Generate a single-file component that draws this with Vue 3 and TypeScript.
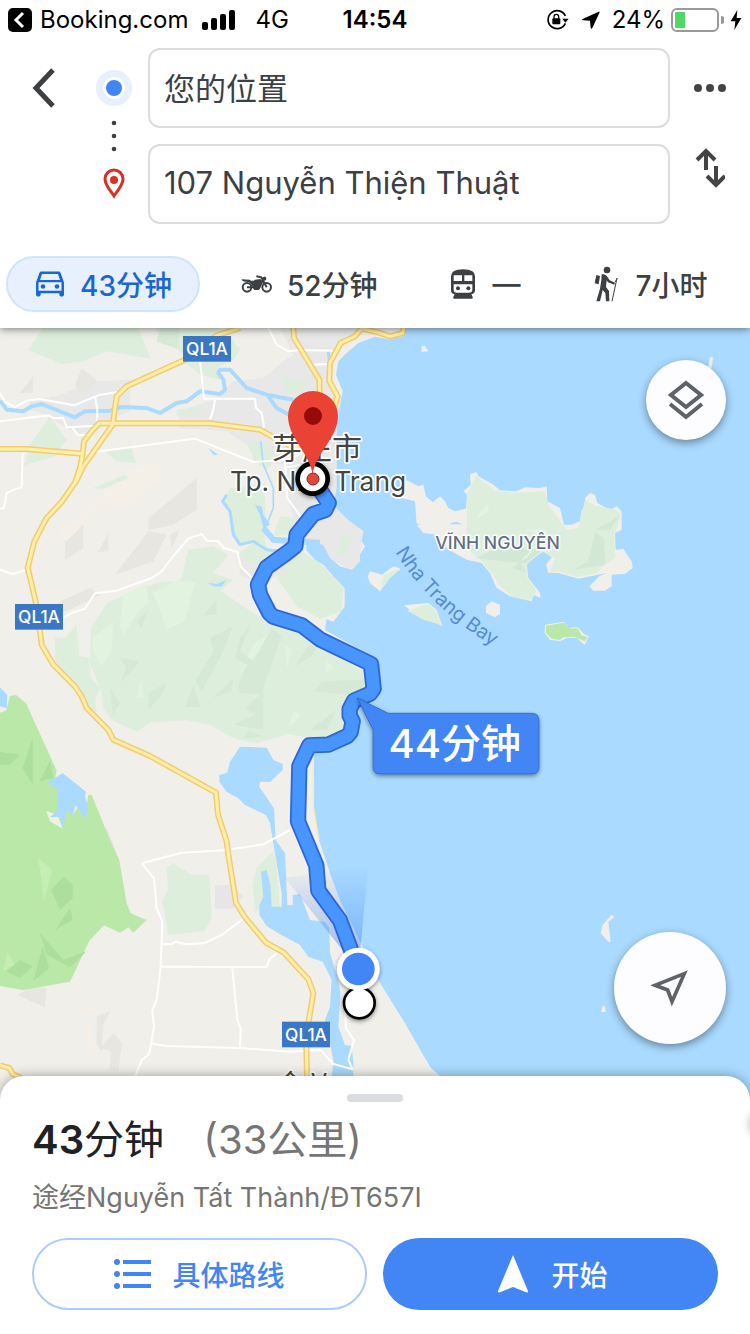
<script setup lang="ts">
import { ref } from 'vue'

type Mode = 'car' | 'moto' | 'train' | 'walk'

const modes: { id: Mode; name: string; time: string }[] = [
  { id: 'car', name: '驾车', time: '43分钟' },
  { id: 'moto', name: '摩托车', time: '52分钟' },
  { id: 'train', name: '公共交通', time: '—' },
  { id: 'walk', name: '步行', time: '7小时' },
]

const active = ref<Mode>('car')
const origin = ref('您的位置')
const destination = ref('107 Nguyễn Thiện Thuật')

const majorRoads = [
  'M720 0L650 22L555 95L380 175L350 205L338 290L250 415L228 460L185 522L140 570L103 640L83 720L92 756L108 826L120 910L125 950L160 1010L225 1075L245 1105L260 1140L325 1206L340 1235L450 1284L648 1394L654 1460L680 1540L685 1580L708 1725L735 1768L798 1844L852 1874L925 1954L940 1996L925 2085L919 2160L923 2316',
  'M0 363H80L248 377L252 340L275 310L297 286H630L780 305L850 345L910 365',
  'M248 377L240 420L226 462',
  'M880 0L882 30L958 155L960 250L930 360',
  'M1212 -5L1208 15L1170 25L1130 12L1085 2L1065 25L1022 45L990 105L988 160L1013 205L1000 250L940 400',
  'M0 2212L28 2220L38 2238L64 2250',
]

const minorRoads = [
  'M0 280L148 262L160 270H190L200 298L290 293',
  'M200 298H215L235 322L258 320',
  'M285 205L292 245L290 293',
  'M0 195L15 222L45 238L80 218L120 213L222 232L300 200L350 193',
  'M805 0L830 50L865 70L900 66L1000 68',
  'M600 95L612 212H765L768 240L785 255L792 295L785 305',
  'M645 215L640 245L630 275',
  'M940 110L985 108',
  'M258 375L585 332L760 402L860 395L910 375',
  'M68 375L65 478L42 485L20 495L12 540L0 542',
  'M855 400L862 510L905 570',
  'M850 420L900 410',
  'M0 725L38 738L80 725',
  'M190 870L215 855L255 842L285 796L350 788L455 750L485 730L515 690L565 632L605 618L620 638L655 640L672 660L712 672L722 715L755 748',
  'M425 1606L545 1574L680 1566L790 1549L870 1506',
  'M425 1606L462 1651L470 1741L487 1781L482 1916L470 2016L457 2046L462 2096L450 2166L445 2181L425 2196L400 2260',
  'M487 1849H515L525 1841L560 1849L612 1846L665 1821L730 1773',
  'M482 1916L800 1917L808 1894L830 1876',
  'M697 1921L712 2076L722 2101L720 2159',
  'M450 2146L500 2154L720 2160L870 2171L962 2166L1000 2208L1058 2224L1045 2196L1062 2136L1038 2101L1035 2036',
]

const routeLine =
  'M938 452L986 525L976 546L940 558L890 620L886 655L860 675L800 718L774 770L780 800L808 855L820 866L905 892L960 934L1113 1008L1121 1082L1110 1097L1062 1118L1049 1143L1049 1163L1058 1180L1052 1212L1042 1224L985 1250L928 1252L898 1315L894 1480L949 1612L955 1688L1020 1777L1075 1925'

const shields = [
  { x: 549, y: 24 },
  { x: 45, y: 828 },
  { x: 846, y: 2081 },
]
</script>

<template>
  <div class="app">
    <header class="top">
      <div class="status">
        <div class="status-side">
          <svg width="24" height="24" viewBox="0 0 24 24" aria-hidden="true">
            <rect width="24" height="24" rx="5" />
            <path d="M15 5L8 12L15 19" fill="none" stroke="#fff" stroke-width="3" />
          </svg>
          <a href="#" class="return-link">Booking.com</a>
          <svg class="signal" width="34" height="20" viewBox="0 0 34 20" aria-hidden="true">
            <rect x="0" y="12" width="6" height="8" rx="2" />
            <rect x="9" y="8" width="6" height="12" rx="2" />
            <rect x="18" y="4" width="6" height="16" rx="2" />
            <rect x="27" y="0" width="6" height="20" rx="2" />
          </svg>
          <span class="network">4G</span>
        </div>
        <time class="clock">14:54</time>
        <div class="status-side end">
          <svg width="23" height="22" viewBox="0 0 69 66" aria-hidden="true">
            <path d="M58 43A27 27 0 1 1 58 21" fill="none" stroke="#000" stroke-width="5" />
            <path d="M49 29H68L58 41Z" />
            <rect x="19" y="28" width="24" height="18" rx="3" />
            <path d="M24 29V23a7 7 0 0 1 14 0v6" fill="none" stroke="#000" stroke-width="4" />
          </svg>
          <svg class="gps" width="19" height="19" viewBox="0 0 57 57" aria-hidden="true">
            <path d="M53 2Q57 1 55 6L34 51Q31 56 29 50L27 29L6 28Q-1 27 5 24Z" />
          </svg>
          <span class="percent">24%</span>
          <svg width="53" height="24" viewBox="0 0 53 24" aria-hidden="true">
            <rect x="1" y="1" width="46" height="22" rx="5" fill="none" stroke="#999" stroke-width="2" />
            <rect x="4" y="4" width="10" height="16" rx="1" fill="#4cd964" />
            <path d="M50 8a4 4 0 0 1 0 8z" fill="#999" />
          </svg>
          <svg width="12" height="20" viewBox="0 0 36 60" aria-hidden="true">
            <path d="M22 0L2 34H16L13 60L34 24H20Z" />
          </svg>
        </div>
      </div>

      <form class="search" @submit.prevent>
        <button type="button" class="icon-button back" aria-label="返回">
          <svg width="24" height="40" viewBox="0 0 24 40">
            <path d="M21 2L4 20L21 38" fill="none" stroke="#3c4043" stroke-width="5" />
          </svg>
        </button>
        <svg class="stops" width="36" height="176" viewBox="0 0 36 176" aria-hidden="true">
          <circle cx="18" cy="40" r="18" fill="#e8f0fe" />
          <circle cx="18" cy="40" r="11" fill="#fff" />
          <circle cx="18" cy="40" r="8" fill="#4285f4" />
          <g fill="#3c4043">
            <circle cx="18" cy="75" r="2.3" />
            <circle cx="18" cy="88" r="2.3" />
            <circle cx="18" cy="101" r="2.3" />
          </g>
          <path d="M18 148C14 142 9 137 9 131a9 9 0 0 1 18 0C27 137 22 142 18 148Z" fill="none" stroke="#d93025" stroke-width="3" />
          <circle cx="18" cy="132" r="4" fill="#d93025" />
        </svg>
        <div class="fields">
          <input v-model="origin" type="text" aria-label="起点" />
          <input v-model="destination" type="text" aria-label="目的地" />
        </div>
        <div class="side-actions">
          <button type="button" class="icon-button" aria-label="更多">
            <svg width="32" height="8" viewBox="0 0 32 8" fill="#444">
              <circle cx="4" cy="4" r="4" />
              <circle cx="16" cy="4" r="4" />
              <circle cx="28" cy="4" r="4" />
            </svg>
          </button>
          <button type="button" class="icon-button" aria-label="交换起点和目的地">
            <svg width="30" height="40" viewBox="0 0 30 40" fill="none" stroke="#444" stroke-width="4">
              <path d="M11 22V3M2 12L11 3L20 12" />
              <path d="M21 18V37M12 28L21 37L30 28" />
            </svg>
          </button>
        </div>
      </form>

      <nav class="modes" aria-label="出行方式">
        <button
          v-for="mode in modes"
          :key="mode.id"
          type="button"
          class="mode"
          :class="{ active: active === mode.id }"
          :aria-pressed="active === mode.id"
          :aria-label="mode.name + ' ' + mode.time"
          @click="active = mode.id"
        >
          <svg v-if="mode.id === 'car'" width="32" height="32" viewBox="1.7 2.7 20.6 20.6" fill="currentColor">
            <path d="M18.92 6.01C18.72 5.42 18.16 5 17.5 5h-11c-.66 0-1.21.42-1.42 1.01L3 12v8c0 .55.45 1 1 1h1c.55 0 1-.45 1-1v-1h12v1c0 .55.45 1 1 1h1c.55 0 1-.45 1-1v-8l-2.08-5.99zM6.85 6.5h10.29l1.28 3.91H5.57L6.85 6.5zM19.4 17.4H4.6v-5.5h14.8v5.5z" />
            <circle cx="7.5" cy="14.6" r="1.5" />
            <circle cx="16.5" cy="14.6" r="1.5" />
          </svg>
          <svg v-else-if="mode.id === 'moto'" width="32" height="32" viewBox="0 0 96 96" fill="currentColor">
            <g fill="none" stroke="currentColor" stroke-width="6">
              <circle cx="18" cy="58" r="13" />
              <circle cx="77" cy="58" r="13" />
              <path d="M77 58L61 28L46 25M18 58H42M62 35L74 28" />
            </g>
            <path d="M2 34L26 35Q34 42 42 35L58 33L70 42Q62 46 60 56L54 66H40Q35 62 34 54Q28 40 13 41Q3 41 2 34Z" />
            <circle cx="70" cy="32" r="6" />
          </svg>
          <svg v-else-if="mode.id === 'train'" width="32" height="32" viewBox="0 0 96 96">
            <path d="M12 25Q12 4 48 4T84 25V66Q84 77 73 79L77 87Q79 91 75 92H21Q17 91 19 87L23 79Q12 77 12 66Z" fill="currentColor" />
            <path d="M20 22H45V39H20ZM52 22H76V39H52ZM20 49H76V65Q76 74 66 74H30Q20 74 20 65Z" fill="#fff" />
            <circle cx="33" cy="61" r="6" fill="currentColor" />
            <circle cx="64" cy="61" r="6" fill="currentColor" />
          </svg>
          <svg v-else class="walker" width="32" height="32" viewBox="0 0 96 96" fill="currentColor">
            <circle cx="51" cy="6" r="10" />
            <path d="M19 21L30 24L26 49L14 46Z" />
            <path d="M35 19Q47 16 54 29L59 37L75 44L73 50L54 43L50 37L48 57L57 69L58 100H48L46 75L38 66L30 100H19L30 62L34 37Z" />
            <path d="M81 30L66 100M75 42L82 31" fill="none" stroke="currentColor" stroke-width="3" />
          </svg>
          <span>{{ mode.time }}</span>
        </button>
      </nav>
    </header>

    <main class="map">
      <svg class="canvas" viewBox="0 0 2250 2316" preserveAspectRatio="xMidYMin slice" role="img" aria-label="芽庄路线地图">
        <defs>
          <linearGradient id="beam" x1="0" y1="0" x2="0" y2="1">
            <stop offset="0" stop-color="#4285f4" stop-opacity="0" />
            <stop offset="1" stop-color="#4285f4" stop-opacity=".55" />
          </linearGradient>
          <filter id="shade" x="-20%" y="-20%" width="140%" height="150%">
            <feDropShadow dx="0" dy="5" stdDeviation="6" flood-color="#000" flood-opacity=".45" />
          </filter>
          <path id="bay" d="M1186 672Q1300 860 1540 990" />
        </defs>

        <rect width="2250" height="2316" fill="#f0efea" />

        <!-- built-up areas -->
        <g fill="#e8e8e8">
          <path d="M840 0H1080L1010 60L985 150L1010 220V460L1000 530L1090 615L1080 700L1050 725L900 640L860 500L850 410L770 400L740 350L680 310L540 300L535 250L640 215L700 160L790 150L850 100L880 80Z" />
          <path d="M170 205L285 160L390 155V250L340 270L300 300L260 330L200 300L140 260L90 245V215Z" />
          <path d="M715 680L760 660L850 665L790 720L760 756L720 740Z" />
          <path d="M645 1674L700 1668L728 1706L700 1742H645Z" fill="#e6e5e8" />
        </g>

        <!-- terrain relief -->
        <g fill="#e8e6e1">
          <path d="M245 120L292 160L240 200L225 170ZM100 145L98 195L58 195ZM590 450V545L520 590L445 605V570L520 510ZM195 610L250 575V660L195 695ZM325 615V670L295 672ZM445 610L500 620L460 700L345 740ZM540 605L515 660L510 620ZM180 820L270 780L300 800L200 850L170 850ZM880 670L912 670L880 725L800 756Z" />
          <path d="M50 2000L100 1975L140 1980L135 2038ZM290 2065L330 2050L310 2090L305 2170L290 2150ZM340 2116L366 2145L355 2228H330L332 2170L300 2160ZM320 1500L345 1560L360 1660L300 1520Z" />
        </g>
        <g fill="#f4efe7">
          <path d="M400 415L490 405L480 460L370 545L310 530L200 640L170 610L260 545L330 480ZM245 2055L262 2030L328 2050ZM250 2098L272 2090L290 2160L268 2170Z" />
        </g>

        <!-- woodland -->
        <g fill="#ddefdc">
          <path d="M130 0H415L452 92L320 70L250 100L185 108L85 66ZM465 0H660L620 30L550 80L500 40Z" />
          <path d="M545 95L590 100L640 60L690 25L720 65L700 95L650 120L660 155L600 140Z" />
          <path d="M850 150L935 155L900 190L860 200ZM530 245L605 240L570 265L530 262Z" />
          <path d="M150 265L200 335L165 385L72 412L90 350ZM310 365L395 360L408 405L350 400ZM375 440L385 450L310 482L280 480Z" />
          <path d="M665 520L690 480L790 470L800 580L790 600L800 665L760 640L715 645L695 600L690 550Z" />
          <path d="M750 340L790 345L830 390L800 425L760 400ZM840 565L885 570L870 620L820 625ZM1030 615L1058 625L1035 685L1005 680Z" />
          <path d="M565 665L640 655L685 680L640 735L700 756L660 790L480 790L545 750ZM720 672L760 645L830 670L780 705L740 702Z" />
          <path d="M830 750L905 672L960 705L1030 780L1025 850L960 872L890 835Z" />
          <path d="M480 762L630 755L665 790L760 856L905 918L1095 1035L1100 1080L1040 1136L1035 1206L1000 1226L930 1231L865 1218L770 1246L700 1231L630 1191L560 1176L450 1184L410 1211L335 1176L310 1141L305 1090L270 1006L273 900L320 826L400 790Z" />
          <path d="M165 928L195 930L230 890L238 985L268 988L272 1050L302 1080L285 1115L290 1160L258 1130L230 1075L165 1005Z" />
          <path d="M498 1620L518 1606L575 1640H628L635 1770L615 1808L505 1821L487 1721L505 1680Z" />
          <path d="M820 1570L830 1620L840 1740H780L765 1755L757 1670L770 1620Z" />
        </g>
        <g fill="#e2f4df">
          <path d="M370 800L440 770L445 825L415 850L370 920L360 890ZM460 795L525 760L585 762L555 880L500 905ZM280 930L340 880L335 970L305 1015L275 960ZM815 910L770 980L720 1035L760 950ZM855 955L875 960L862 1020ZM425 1045L430 1110L410 1108ZM980 1000L1005 1020L975 1035ZM880 1150L905 1158L865 1200Z" />
        </g>
        <g fill="#d6e9d6">
          <path d="M480 0H540L530 60L470 42ZM360 990L420 1000L362 1065L378 1020ZM330 1080L360 1125L338 1160ZM445 1095L497 1065L490 1095L445 1145ZM580 1070L602 1138H555ZM650 815V860L610 862ZM445 845L425 900L408 880ZM630 930L698 895L665 980L605 1090L585 1060L640 970ZM750 890L720 970L760 1000L815 900L845 925L790 1080V1205L702 1190L765 1160L735 1140L780 1100L720 1095L715 1070L740 1010L705 990L720 930ZM700 1050L695 1090L640 1110ZM885 925L850 1010L870 960ZM965 925L940 980L885 1015L920 960ZM965 1060L1095 1055L1090 1085L1040 1100L945 1090ZM1010 1145L980 1205L930 1205ZM745 1208L790 1225L730 1232Z" />
        </g>

        <!-- nature reserve -->
        <path fill="#bae8a8" d="M0 1154L18 1148L30 1104L48 1101L78 1126L170 1328L165 1350L258 1440L265 1401H275L330 1536L358 1596L380 1726L392 1756L440 1776L400 1814L385 1798L360 1814L312 1792L268 1838L210 1961L68 1986L0 1974Z" />
        <path fill="#acdf9b" d="M0 1272L60 1280L30 1310L0 1312ZM98 1230V1370L68 1320ZM150 1300L160 1350L118 1360ZM153 1686L192 1646L218 1670V1710L180 1745ZM210 1740L218 1775L165 1806ZM128 1855L147 1920L100 1960ZM120 1815L190 1895L260 1870L210 1918L140 1880ZM20 1930L60 1895L98 1915L60 1950Z" />
        <path fill="#c5eeb5" d="M115 1590L158 1625L132 1720ZM22 1870L42 1910L10 1930Z" />
        <path fill="#f0efea" d="M138 1448L172 1460L188 1502L150 1480ZM215 1420L238 1430L218 1462Z" />

        <!-- water -->
        <g fill="#aadaff">
          <path d="M1216 0L1212 24L1165 34L1125 26L1075 45L1040 75L1015 100L1008 140L1028 190L1020 230L1010 300V480L1000 530L1040 572L1090 610L1085 640L1095 655L1080 680V700L1055 725L1020 715L990 690L970 652L920 632L918 665L945 695L970 710L1000 745L1034 781V836L1000 881L980 874L975 906L1125 990L1130 1080L1060 1110L1050 1170L1070 1210L1050 1225L940 1270V1436L957 1536L990 1636L1020 1716L1085 1851L1135 1956L1215 2086L1290 2216L1320 2244L1400 2316H2250V0Z" />
          <path d="M720 1256L800 1259L820 1296L848 1308V1326L810 1362L780 1361L778 1376L822 1441L827 1536L855 1576L862 1731H878V1701L900 1698L930 1776L975 1781L988 1801L990 1876L1012 1946L1022 1996L1015 2096L1035 2151L1055 2154L1060 2206V2316H990L1000 2196L975 2076L990 2036L995 1956L968 1901L925 1886L900 1851L835 1816L800 1794L778 1761V1731L790 1706L783 1631L800 1626L812 1676L815 1736H845V1696L825 1576L810 1486L798 1461L735 1431L715 1411L680 1391L658 1361V1341L682 1334L690 1301Z" />
          <path d="M140 1364L188 1336L258 1391L255 1406L264 1436L258 1471L245 1461L228 1431L218 1461L200 1446L188 1501L180 1466L150 1468L172 1448V1384L155 1371ZM0 1078L22 1101L20 1141L0 1135Z" />
          <path d="M625 360L655 380L640 380ZM625 765L650 768L680 755L665 776L640 775ZM765 532L785 535L790 560L810 590L790 600L780 560Z" />
        </g>
        <g fill="none" stroke="#aadaff" stroke-width="9" stroke-linejoin="round">
          <path stroke-width="12" d="M0 218L20 245L70 250L95 235L125 228L225 268L255 250L330 248L365 237L440 240L480 255L530 225L560 220L600 190L660 198L675 185L670 155L655 135L660 125L690 125L740 180L800 200L880 215M805 205L830 240L885 270" />
          <path d="M782 340L790 410L820 480V540L800 590L790 610" stroke-width="5" />
          <path d="M790 600L820 635L880 640L960 644" stroke-width="18" />
          <path d="M680 500L668 520L690 550L700 620L720 650L760 640L800 665L860 672" />
          <path d="M985 70L988 100" />
        </g>
        <path d="M940 1280V1436L957 1536" fill="none" stroke="#fbe9b7" stroke-width="4" />

        <!-- islands -->
        <g fill="#f0efea">
          <path d="M1205 460L1222 457L1255 475L1270 470L1278 505L1298 523L1320 505L1335 520L1345 540L1365 550L1398 542L1402 500L1390 490L1412 470L1410 438L1430 432L1435 445L1480 470L1500 487L1550 490L1575 478L1620 480L1640 475L1642 520L1680 540L1692 590H1715L1740 580L1745 545L1758 540L1755 510L1770 495L1785 500L1792 525L1830 545L1850 535L1865 550V605L1845 615L1847 665L1870 663L1895 700L1898 720L1875 738L1835 740L1835 775L1815 788H1780L1768 775L1798 745L1820 735L1735 752L1675 735H1645L1638 710L1655 688L1630 670L1580 705L1585 750L1620 795L1622 810L1600 800L1595 820L1530 805L1490 780L1470 735L1445 705L1400 695L1345 665L1310 620L1270 615L1250 590L1245 520L1205 510Z" />
          <path d="M1103 745L1110 730L1145 740L1180 715L1202 722L1170 750L1140 790L1110 765ZM1212 832L1285 825L1310 845L1327 895L1290 875L1240 855ZM1458 834L1475 820L1500 830V858L1485 868L1458 855ZM1635 890L1690 881L1708 900L1732 897L1752 918L1767 925L1754 950L1730 930L1700 930L1680 940L1650 935L1634 915Z" />
          <path d="M1265 55L1275 53L1285 70L1265 72ZM2130 88H2139L2135 120L2123 125ZM1835 1760L1843 1767L1825 1782L1832 1840L1825 1842L1802 1815L1808 1790ZM1808 2034H1814L1818 2052H1803Z" />
        </g>
        <g fill="#ddefdc">
          <path d="M1428 444L1485 488L1540 494L1635 490L1645 530L1700 605L1735 600L1755 515L1788 533L1850 545L1862 555L1850 605L1843 615L1845 690L1815 710L1790 735L1730 748L1680 730L1648 735L1665 690L1625 670L1580 710L1582 750L1610 790L1595 815L1540 808L1500 775L1475 735L1445 700L1400 660V500Z" />
          <path d="M1150 740L1198 722L1170 750L1143 780ZM1222 848L1285 828L1308 848L1322 890L1270 875Z" />
        </g>
        <path fill="#bae8a8" d="M1638 893L1690 884L1712 902L1732 900L1745 922L1764 928L1754 940L1722 926L1690 928L1680 936L1655 932L1638 915Z" />
        <path fill="#d3e7d5" d="M1785 612L1812 630L1815 710L1720 725L1765 700ZM1862 560L1830 605H1785L1840 575ZM1500 655L1630 665L1575 705L1510 700L1430 690ZM1560 700L1580 735L1538 720Z" />
        <path fill="#e4f4e3" d="M1465 523V550L1425 575ZM1570 605H1640V625ZM1620 640L1580 690L1560 700Z" />
        <path fill="#aadaff" d="M1228 585L1240 582L1262 590H1228ZM1352 585L1370 582L1388 589H1352Z" />

        <!-- roads -->
        <g fill="none" stroke-linejoin="round">
          <path v-for="road in minorRoads" :key="road" :d="road" stroke="#fff" stroke-width="6" />
          <path v-for="road in majorRoads" :key="road" :d="road" stroke="#f3cc6c" stroke-width="18" />
          <path v-for="road in majorRoads" :key="road + 'fill'" :d="road" stroke="#ffefab" stroke-width="9" />
        </g>

        <g v-for="shield in shields" :key="shield.y">
          <rect :x="shield.x" :y="shield.y" width="144" height="77" fill="#3a78c6" />
          <text class="shield" :x="shield.x + 72" :y="shield.y + 58">QL1A</text>
        </g>

        <text class="city" x="816" y="394" font-size="90">芽庄市</text>
        <text class="city" x="690" y="490" font-size="79">Tp. Nha Trang</text>
        <text class="island" x="1306" y="663">VĨNH NGUYÊN</text>
        <text class="bay"><textPath href="#bay">Nha Trang Bay</textPath></text>
        <text class="city" x="832" y="2296" font-size="78">会</text>
        <text class="city" x="932" y="2288" font-size="72">V</text>

        <path d="M1075 1925L855 1650L1105 1610Z" fill="url(#beam)" />

        <!-- route -->
        <g fill="none" stroke-linejoin="round">
          <path :d="routeLine" stroke="#2f66d8" stroke-width="49" />
          <path :d="routeLine" stroke="#4795ff" stroke-width="38" />
        </g>

        <g filter="url(#shade)">
          <circle cx="1078" cy="2025" r="46" fill="#fff" stroke="#000" stroke-width="8" />
          <circle cx="1075" cy="1923" r="64" fill="#fff" />
        </g>
        <circle cx="1075" cy="1923" r="49" fill="#4285f4" />

        <circle cx="938" cy="452" r="45" fill="#fff" stroke="#000" stroke-width="14" filter="url(#shade)" />
        <path d="M938 440C930 375 864 330 864 264a75 75 0 0 1 150 0C1014 330 946 375 938 440Z" fill="#ea4335" />
        <circle cx="939" cy="264" r="27" fill="#960a0a" />
        <circle cx="939" cy="453" r="18" fill="#e2463d" stroke="#7d2724" stroke-width="3" />

        <g filter="url(#shade)">
          <path d="M1072 1110L1165 1156H1595Q1617 1156 1617 1178V1316Q1617 1338 1595 1338H1141Q1119 1338 1119 1316V1205Z" fill="#4285f4" stroke="#2a5db0" stroke-width="2" />
        </g>
        <text class="callout" x="1364" y="1290">44分钟</text>
      </svg>

      <button type="button" class="fab layers" aria-label="图层">
        <svg width="36" height="40" viewBox="0 0 36 40" fill="none" stroke="#5f6368" stroke-width="4">
          <path d="M18 3L33 15L18 27L3 15Z" />
          <path d="M2 24L18 37L34 24" />
        </svg>
      </button>
      <button type="button" class="fab locate" aria-label="定位">
        <svg width="38" height="38" viewBox="0 0 114 114" fill="none" stroke="#5f6368" stroke-width="11">
          <path d="M100 14L12 49L50 63L63 98Z" />
        </svg>
      </button>
    </main>

    <section class="sheet">
      <div class="handle"></div>
      <h1 class="summary"><strong>43</strong>分钟 <span class="distance">(33公里)</span></h1>
      <p class="via">途经Nguyễn Tất Thành/ĐT657I</p>
      <div class="actions">
        <button type="button" class="action outline">
          <svg width="38" height="32" viewBox="0 0 38 32" fill="currentColor" aria-hidden="true">
            <circle cx="3" cy="4" r="3" />
            <circle cx="3" cy="16" r="3" />
            <circle cx="3" cy="28" r="3" />
            <path d="M9 2H37V6H9ZM9 14H37V18H9ZM9 26H37V30H9Z" />
          </svg>
          具体路线
        </button>
        <button type="button" class="action solid">
          <svg width="38" height="38" viewBox="-12 0 114 114" fill="currentColor" aria-hidden="true">
            <path d="M48 0L93 108Q94 114 87 112L48 96L9 112Q2 114 3 108Z" />
          </svg>
          开始
        </button>
      </div>
    </section>
  </div>
</template>

<style>
body {
  margin: 0;
}
</style>

<style scoped>
* {
  box-sizing: border-box;
}

.app {
  display: flex;
  flex-direction: column;
  min-height: 100vh;
  overflow: hidden;
  background: #fff;
  color: #3c4043;
  font-family: Inter, "Noto Sans CJK SC", sans-serif;
}

button,
input {
  font: inherit;
  color: inherit;
}

button {
  padding: 0;
  border: 0;
  background: none;
  cursor: pointer;
}

svg {
  display: block;
  flex: none;
}

.top {
  position: relative;
  z-index: 1;
  background: #fff;
  box-shadow: 0 1px 8px rgba(0, 0, 0, 0.5);
}

.status {
  display: grid;
  grid-template-columns: 1fr auto 1fr;
  align-items: center;
  height: 40px;
  padding: 0 8px;
  color: #000;
  font-size: 24px;
  line-height: 40px;
}

.status-side {
  display: flex;
  align-items: center;
  gap: 8px;
}

.end {
  justify-content: flex-end;
  gap: 6px;
}

.return-link {
  color: inherit;
  text-decoration: none;
}

.signal {
  margin-left: 6px;
}

.network {
  margin-left: 11px;
}

.clock {
  font-weight: 600;
}

.gps {
  margin: 0 6px;
}

.search {
  display: flex;
  padding-top: 8px;
}

.icon-button {
  display: flex;
  align-items: center;
  justify-content: center;
  width: 80px;
  height: 80px;
}

.back {
  width: 88px;
}

.stops {
  margin: 0 16px 0 8px;
}

.fields {
  display: flex;
  flex: 1;
  flex-direction: column;
  gap: 16px;
  min-width: 0;
}

.fields input {
  width: 100%;
  height: 80px;
  padding: 0 14px 4px;
  border: 2px solid #dadce0;
  border-radius: 12px;
  background: #fff;
  font-size: 31px;
}

.modes {
  display: flex;
  gap: 13px;
  padding: 32px 6px 16px;
}

.mode {
  display: flex;
  align-items: center;
  gap: 14px;
  height: 56px;
  padding: 0 26px;
  border: 2px solid transparent;
  border-radius: 28px;
  font-size: 28px;
  font-weight: 500;
  white-space: nowrap;
}

.active {
  border-color: #d2e3fc;
  background: #e8f0fe;
  color: #1967d2;
}

.walker {
  overflow: visible;
}

.map {
  position: relative;
  flex: 1;
  min-height: 480px;
  background: #aadaff;
}

.canvas {
  position: absolute;
  inset: 0;
  width: 100%;
  height: 100%;
}

.shield {
  fill: #fff;
  font-size: 52px;
  font-weight: 500;
  text-anchor: middle;
}

.city {
  fill: #444;
  stroke: #fff;
  stroke-width: 10px;
  stroke-linejoin: round;
  paint-order: stroke;
}

.island {
  fill: #5f6f86;
  stroke: #fff;
  stroke-width: 9px;
  stroke-linejoin: round;
  paint-order: stroke;
  font-size: 53px;
  font-weight: 500;
}

.bay {
  fill: #568cd3;
  font-size: 59px;
}

.callout {
  fill: #fff;
  font-size: 120px;
  font-weight: 500;
  text-anchor: middle;
}

.fab {
  position: absolute;
  right: 24px;
  display: flex;
  align-items: center;
  justify-content: center;
  border-radius: 50%;
  background: #fdfdff;
  box-shadow: 0 3px 8px rgba(0, 0, 0, 0.4);
}

.layers {
  top: 32px;
  width: 80px;
  height: 80px;
}

.locate {
  bottom: 56px;
  width: 112px;
  height: 112px;
}

.sheet {
  position: relative;
  z-index: 1;
  margin-top: -24px;
  padding: 18px 32px 24px;
  overflow: hidden;
  border-radius: 24px 24px 0 0;
  background: #fff;
  box-shadow: 0 0 12px rgba(0, 0, 0, 0.35);
}

/* soft edge of the neighbouring card */
.sheet::after {
  content: "";
  position: absolute;
  top: 36px;
  left: 100%;
  width: 24px;
  height: 24px;
  border-radius: 12px;
  box-shadow: 0 0 10px rgba(0, 0, 0, 0.3);
}

.handle {
  width: 56px;
  height: 8px;
  margin: 0 auto;
  border-radius: 4px;
  background: #dadce0;
}

.summary {
  margin: 14px 0 0;
  color: #202124;
  font-size: 40px;
  font-weight: 400;
  line-height: 48px;
}

.summary strong {
  font-weight: 600;
}

.distance {
  margin-left: 28px;
  color: #757575;
}

.via {
  margin: 16px 0 0;
  color: #757575;
  font-size: 27px;
  line-height: 36px;
}

.actions {
  display: grid;
  grid-template-columns: 1fr 1fr;
  gap: 16px;
  margin-top: 22px;
}

.action {
  display: flex;
  align-items: center;
  justify-content: center;
  gap: 20px;
  height: 72px;
  border-radius: 36px;
  font-size: 28px;
  font-weight: 500;
}

.outline {
  border: 2px solid #aecbfa;
  color: #4285f4;
}

.solid {
  background: #4285f4;
  color: #fff;
}
</style>
